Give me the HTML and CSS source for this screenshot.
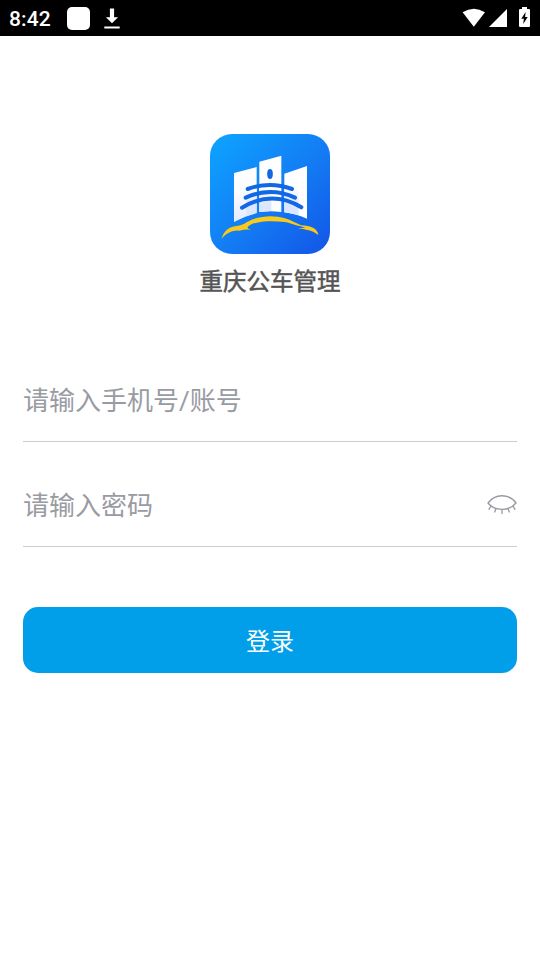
FILE: index.html
```html
<!DOCTYPE html>
<html lang="zh-CN">
<head>
<meta charset="utf-8">
<title>重庆公车管理</title>
<link rel="stylesheet" href="styles.css">
</head>
<body>
<header class="status">
  <span class="time">8:42</span>
  <span class="app-square"></span>
  <svg class="download" width="16" height="22" viewBox="0 0 16 22" fill="#fff"><path d="M5.900 .5h4.200v8.700h4L8 15.300 1.900 9.200h4zM.3 18.600h15.400v2H.3z"/></svg>
  <svg class="wifi" width="24" height="20" viewBox="0 0 24 20" fill="#fff"><path d="M.6 4.300Q11.800-3 23 4.300L11.800 18.800z"/></svg>
  <svg class="signal" width="18" height="18" viewBox="0 0 18 18" fill="#fff"><path d="M18 0v18H0z"/></svg>
  <svg class="battery" width="11" height="20" viewBox="0 0 11 20"><path fill="#fff" d="M3 0h5v2h2q1 0 1 1v16q0 1-1 1H1q-1 0-1-1V3q0-1 1-1h2z"/><path fill="#000" d="M6.600 5L2.300 11.700h2.600L4.200 17l4.500-7H6.100z"/></svg>
</header>
<main class="login">
  <div class="brand">
    <svg class="logo" width="120" height="120" viewBox="0 0 360 360">
      <defs>
        <linearGradient id="bg" x1="0" y1="0" x2="1" y2="1"><stop offset="0" stop-color="#0da5ff"/><stop offset=".5" stop-color="#137ff5"/><stop offset="1" stop-color="#1355e6"/></linearGradient>
        <linearGradient id="wall" x1="0" y1="0" x2="0" y2="1"><stop offset="0" stop-color="#fff"/><stop offset=".45" stop-color="#fbfcff"/><stop offset="1" stop-color="#e4ebff"/></linearGradient>
        <linearGradient id="shade" x1="0" y1="0" x2="0" y2="1"><stop offset="0" stop-color="#fff"/><stop offset=".6" stop-color="#dce7ff"/></linearGradient>
      </defs>
      <rect width="360" height="360" rx="66" fill="url(#bg)"/>
      <path fill="url(#wall)" d="M72 117L140 99V237Q105 246 72 264z"/>
      <path fill="#fff" d="M148 83L214 65V234Q181 229 148 234z"/>
      <path fill="#fff" d="M223 119L291 96V254Q260 240 223 235z"/>
      <path fill="url(#shade)" d="M109 160h31v77l-31 9zM148 160h36v71l-36 3zM223 160h43v83l-43-8z"/>
      <ellipse cx="180" cy="120" rx="8.500" ry="15" fill="#1268df"/>
      <g fill="none" stroke="#1268e4" stroke-width="12" stroke-linecap="round"><path d="M113 165Q180 141 246 165"/><path d="M107 191Q181 157 255 191"/><path d="M96 221Q186 167 274 220"/></g>
      <path fill="#f9ca19" d="M34 314C42 290 57 277 84 275C105 272 111 262 130 255C161 244 198 244 225 253C243 258 259 268 273 274C303 275 322 283 325 303C307 288 288 287 260 281Q274 284 286 280C261 276 246 268 225 264C185 260 139 260 116 276Q107 283 123 287Q105 285 88 290C65 287 49 299 34 314z"/>
    </svg>
    <h1 class="name">重庆公车管理</h1>
  </div>
  <form class="form">
    <div class="field"><input class="input" type="text" placeholder="请输入手机号/账号"></div>
    <div class="field"><input class="input" type="password" placeholder="请输入密码">
      <svg class="eye" width="30" height="22" viewBox="0 0 30 22" fill="none" stroke="#9699a0" stroke-width="1.300" stroke-linecap="round"><path d="M1 9C8-.7 22-.7 29 9C22 17.600 8 17.600 1 9zM4 12L2 15.300M9 14.500L7.700 18M15 15.700V19.500M21 14.500L22.300 18M26 12L28 15.300"/></svg>
    </div>
    <button class="submit" type="button">登录</button>
  </form>
</main>
</body>
</html>
```
FILE: styles.css
```css
* { box-sizing: border-box; }
body {
  margin: 0;
  min-height: 960px;
  background: #fff;
  font-family: "Noto Sans CJK SC", sans-serif;
}
.status {
  display: flex;
  height: 36px;
  padding: 0 10px 0 9px;
  background: #000;
  color: #fff;
}
.time {
  width: 58px;
  font: 500 21px/38px Roboto, sans-serif;
  letter-spacing: .15px;
}
.app-square {
  width: 23px;
  height: 23px;
  margin-top: 7px;
  border-radius: 5px;
  background: #fff;
}
.download { margin: 8px 0 0 14px; }
.wifi { margin: 8px 3px 0 auto; }
.signal { margin: 9px 12px 0 0; }
.battery { margin-top: 7px; }
.login { padding: 98px 23px 0; }
.brand {
  display: flex;
  flex-direction: column;
  align-items: center;
}
.name {
  margin: 8px 0 1px;
  color: #555;
  font-size: 23.500px;
  font-weight: 400;
  -webkit-text-stroke: .5px #555;
  line-height: 36px;
}
.form { margin-top: 58px; }
.field {
  display: flex;
  align-items: center;
  height: 105px;
  padding-top: 22px;
  border-bottom: 1px solid #ccc;
}
.field:first-child { height: 85px; padding-top: 2px; }
.input {
  flex: 1;
  min-width: 0;
  height: 60px;
  padding: 2px 0 0;
  border: 0;
  outline: 0;
  background: none;
  color: #333;
  font: 26px Roboto, "Noto Sans CJK SC", sans-serif;
}
.input::placeholder { color: #999ba3; opacity: 1; }
.submit {
  display: block;
  width: 100%;
  height: 66px;
  margin-top: 60px;
  padding: 0 0 2px;
  border: 0;
  border-radius: 15px;
  background: #019fe9;
  color: #fff;
  font: 24px "Noto Sans CJK SC", sans-serif;
}
```
